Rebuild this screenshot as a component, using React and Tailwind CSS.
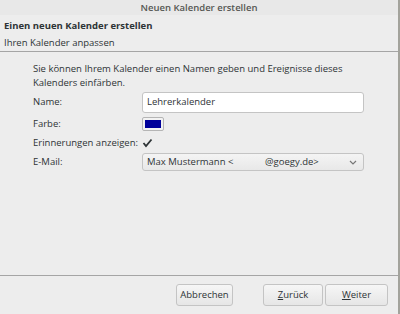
import React from "react";

const font = { fontFamily: '"Open Sans", "Noto Sans", sans-serif' };

export default function App() {
  return (
    <div className="flex h-[314px] w-[400px] bg-[#a3a39c]" style={font}>
      <div className="flex w-[398px] flex-col bg-[#ededed] text-[9.5px] text-[#2e3436]">
        {/* Title bar */}
        <div className="flex h-[15px] items-center justify-center bg-[#e8e8e8] pt-[2px] text-[9.5px] font-semibold text-[#555753]">
          Neuen Kalender erstellen
        </div>

        {/* Wizard header */}
        <div className="flex h-[37px] flex-col border-b border-[#a5a5a5] px-[4px] pt-[2px]">
          <div className="h-[17px] leading-[17px] font-bold">Einen neuen Kalender erstellen</div>
          <div className="h-[17px] leading-[17px]">Ihren Kalender anpassen</div>
        </div>

        {/* Content */}
        <div className="flex flex-1 flex-col pl-[33px] pt-[10px]">
          <p className="leading-[14px]">
            Sie können Ihrem Kalender einen Namen geben und Ereignisse dieses
            <br />
            Kalenders einfärben.
          </p>

          <div className="mt-[2px] grid grid-cols-[109px_222px] items-center">
            <span className="whitespace-nowrap">Name:</span>
            <div className="flex h-[21px] items-center rounded-[3px] border border-[#c4c4c4] bg-white px-[4px]">
              Lehrerkalender
            </div>

            <span className="mt-[4px] whitespace-nowrap">Farbe:</span>
            <div className="mt-[4px] flex">
              <div className="flex h-[14px] w-[22px] items-center justify-center rounded-[2px] border border-[#b5b5b5] bg-[#f2f2f2]">
                <div className="h-[8px] w-[16px] bg-[#00009a]" />
              </div>
            </div>

            <span className="mt-[6px] whitespace-nowrap leading-[12px]">Erinnerungen anzeigen:</span>
            <div className="mt-[6px] flex h-[12px] items-center">
              <svg width="11" height="10" viewBox="0 0 11 10">
                <path d="M1.5 5 L4 8 L9.5 1.5" fill="none" stroke="#2e3436" strokeWidth="1.8" />
              </svg>
            </div>

            <span className="mt-[4px] whitespace-nowrap">E-Mail:</span>
            <div className="mt-[4px] flex h-[18px] items-center rounded-[3px] border border-[#c4c4c4] bg-gradient-to-b from-[#f4f4f4] to-[#e8e8e8] pl-[4px] pr-[6px]">
              <span className="w-[118px]">Max Mustermann &lt;</span>
              <span className="flex-1">@goegy.de&gt;</span>
              <svg width="8" height="5" viewBox="0 0 8 5">
                <path d="M1 1 L4 4 L7 1" fill="none" stroke="#777" strokeWidth="1.2" />
              </svg>
            </div>
          </div>
        </div>

        {/* Buttons */}
        <div className="flex h-[39px] items-center border-t border-[#a5a5a5] pr-[10px]">
          <div className="flex-1" />
          <button className="h-[22px] w-[57px] rounded-[3px] border border-[#c4c4c4] bg-gradient-to-b from-[#f6f6f6] to-[#e6e6e6]">
            Abbrechen
          </button>
          <button className="ml-[30px] h-[22px] w-[60px] rounded-[3px] border border-[#c4c4c4] bg-gradient-to-b from-[#f6f6f6] to-[#e6e6e6]">
            <span className="underline">Z</span>urück
          </button>
          <button className="ml-[2px] h-[22px] w-[63px] rounded-[3px] border border-[#c4c4c4] bg-gradient-to-b from-[#f6f6f6] to-[#e6e6e6]">
            <span className="underline">W</span>eiter
          </button>
        </div>
      </div>
    </div>
  );
}
